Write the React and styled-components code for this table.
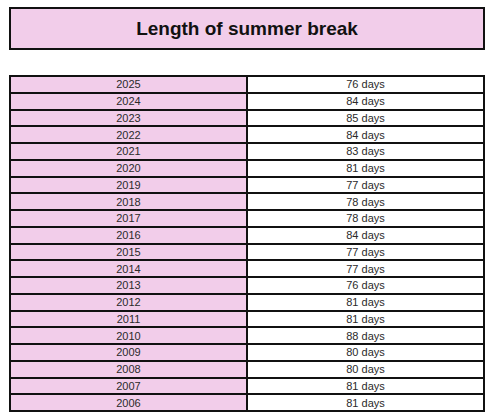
import { Fragment } from "react"
import styled, { createGlobalStyle } from "styled-components"

const GlobalStyle = createGlobalStyle`
  body {
    margin: 0;
    background: #ffffff;
    font-family: "Liberation Sans", Arial, sans-serif;
  }
`

const Page = styled.div`
  display: flex;
  flex-direction: column;
  gap: 25px;
  width: 476px;
  padding: 7px 0 0 9px;
`

const TitleBox = styled.div`
  display: flex;
  align-items: center;
  justify-content: center;
  height: 43px;
  box-sizing: border-box;
  border: 2px solid #111;
  background-color: #f2cdea;
`

const Title = styled.h1`
  margin: 0;
  font-size: 19px;
  font-weight: 700;
  color: #111;
`

const Table = styled.div`
  display: grid;
  grid-template-columns: 1fr 1fr;
  grid-auto-rows: 14.75px;
  gap: 2px;
  padding: 2px;
  background-color: #111;
`

const Cell = styled.div`
  display: flex;
  align-items: center;
  justify-content: center;
  font-size: 11px;
  color: #2a2a2a;
  background-color: ${({ $pink }) => ($pink ? "#f2cdea" : "#ffffff")};
`

const rows = [
  [2025, 76], [2024, 84], [2023, 85], [2022, 84], [2021, 83],
  [2020, 81], [2019, 77], [2018, 78], [2017, 78], [2016, 84],
  [2015, 77], [2014, 77], [2013, 76], [2012, 81], [2011, 81],
  [2010, 88], [2009, 80], [2008, 80], [2007, 81], [2006, 81],
]

export default function App() {
  return (
    <>
      <GlobalStyle />
      <Page>
        <TitleBox>
          <Title>Length of summer break</Title>
        </TitleBox>
        <Table>
          {rows.map(([year, days]) => (
            <Fragment key={year}>
              <Cell $pink>{year}</Cell>
              <Cell>{days} days</Cell>
            </Fragment>
          ))}
        </Table>
      </Page>
    </>
  )
}
